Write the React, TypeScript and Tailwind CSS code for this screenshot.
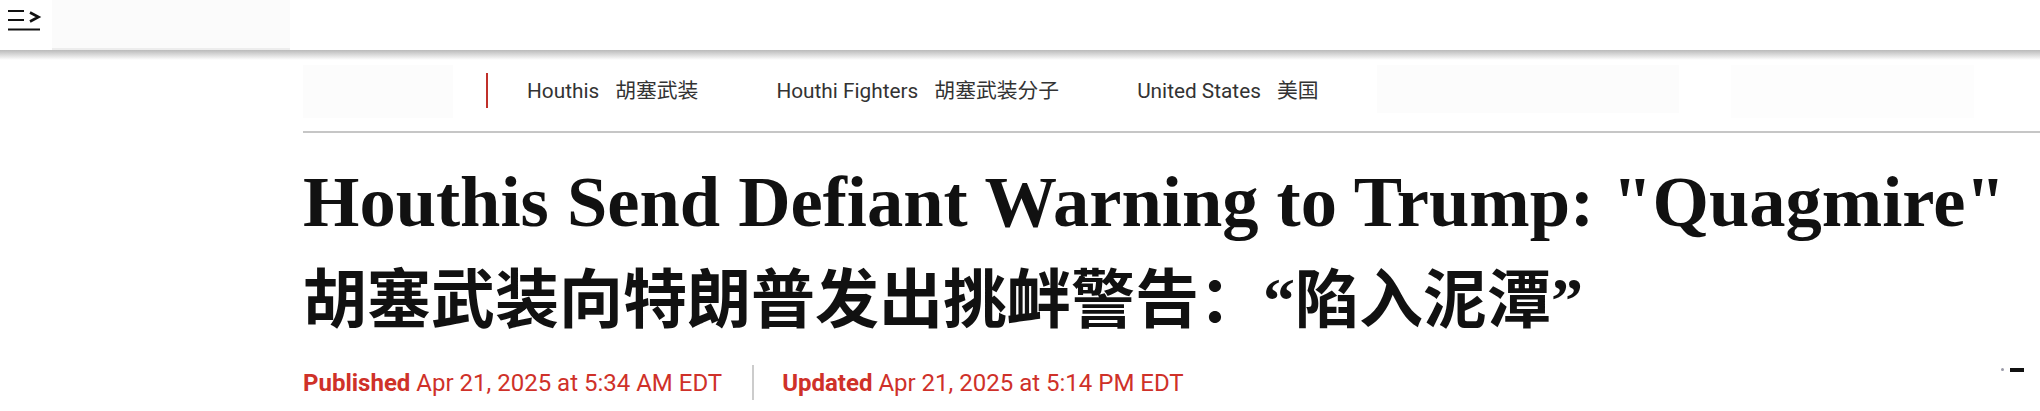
import React from "react";

const tags = [
  { en: "Houthis", zh: "胡塞武装" },
  { en: "Houthi Fighters", zh: "胡塞武装分子" },
  { en: "United States", zh: "美国" },
];

function MenuIcon() {
  return (
    <svg width="34" height="24" viewBox="0 0 34 24" fill="none" stroke="#111" strokeWidth="2">
      <line x1="0" y1="2" x2="16" y2="2" />
      <line x1="0" y1="11" x2="16" y2="11" />
      <polyline points="22,3.5 30.5,8 22,12.5" strokeWidth="2.6" />
      <line x1="0" y1="20.5" x2="32" y2="20.5" />
    </svg>
  );
}

function Header() {
  return (
    <div>
      <div className="flex h-[50px] bg-white">
        <div className="w-[52px] pl-[8px] pt-[9px]">
          <MenuIcon />
        </div>
        <div className="w-[238px] h-[50px] bg-[#fbfbfb] border-b-2 border-[#ededed]" />
      </div>
      <div className="h-[10px] bg-linear-to-b from-[#bababa] to-white" />
    </div>
  );
}

function TagNav() {
  return (
    <div className="flex items-start border-b-2 border-[#c6c6c6] pt-[5px] pb-[13px]">
      <div className="w-[150px] h-[53px] bg-[#fcfcfc]" />
      <div className="flex items-center mt-[8px] ml-[33px] h-[35px]">
        <div className="w-[2px] h-[35px] bg-[#c0302a]" />
        <div className="flex items-center gap-[78px] ml-[39px] text-[20.8px] text-[#333] font-['Roboto',sans-serif] leading-none">
          {tags.map((t) => (
            <span key={t.en} className="whitespace-nowrap">
              {t.en}
              <span className="ml-4 font-['Noto_Sans_CJK_SC',sans-serif]">{t.zh}</span>
            </span>
          ))}
        </div>
      </div>
      <div className="ml-[58px] w-[302px] h-[48px] bg-[#fcfcfc]" />
      <div className="ml-[52px] w-[243px] h-[53px] bg-[#fdfdfd]" />
    </div>
  );
}

function Headline() {
  return (
    <div className="font-['Liberation_Serif','Noto_Sans_CJK_SC',serif] font-bold text-[#111] whitespace-nowrap">
      <h1 className="mt-[33px] text-[72.5px] leading-none">Houthis Send Defiant Warning to Trump: "Quagmire"</h1>
      <h2 className="mt-[30px] text-[64px] leading-none">胡塞武装向特朗普发出挑衅警告：“陷入泥潭”</h2>
    </div>
  );
}

function Dates() {
  return (
    <div className="flex items-center mt-[38px] h-[24px] text-[24px] leading-none text-[#cf3129] font-['Roboto',sans-serif]">
      <span className="whitespace-nowrap">
        <span className="font-bold">Published</span> Apr 21, 2025 at 5:34 AM EDT
      </span>
      <div className="w-[2px] h-[35px] bg-[#cccccc] ml-[30px] mr-[28px]" />
      <span className="whitespace-nowrap">
        <span className="font-bold">Updated</span> Apr 21, 2025 at 5:14 PM EDT
      </span>
      <div className="ml-auto mr-[16px] mb-[26px] flex items-center gap-[6px]">
        <span className="w-[3px] h-[3px] rounded-full bg-[#9a9aa8]" />
        <span className="w-[14px] h-[4px] bg-[#111]" />
      </div>
    </div>
  );
}

export default function App() {
  return (
    <div className="w-[2040px] h-[411px] overflow-hidden bg-white">
      <Header />
      <div className="ml-[303px]">
        <TagNav />
        <Headline />
        <Dates />
      </div>
    </div>
  );
}
